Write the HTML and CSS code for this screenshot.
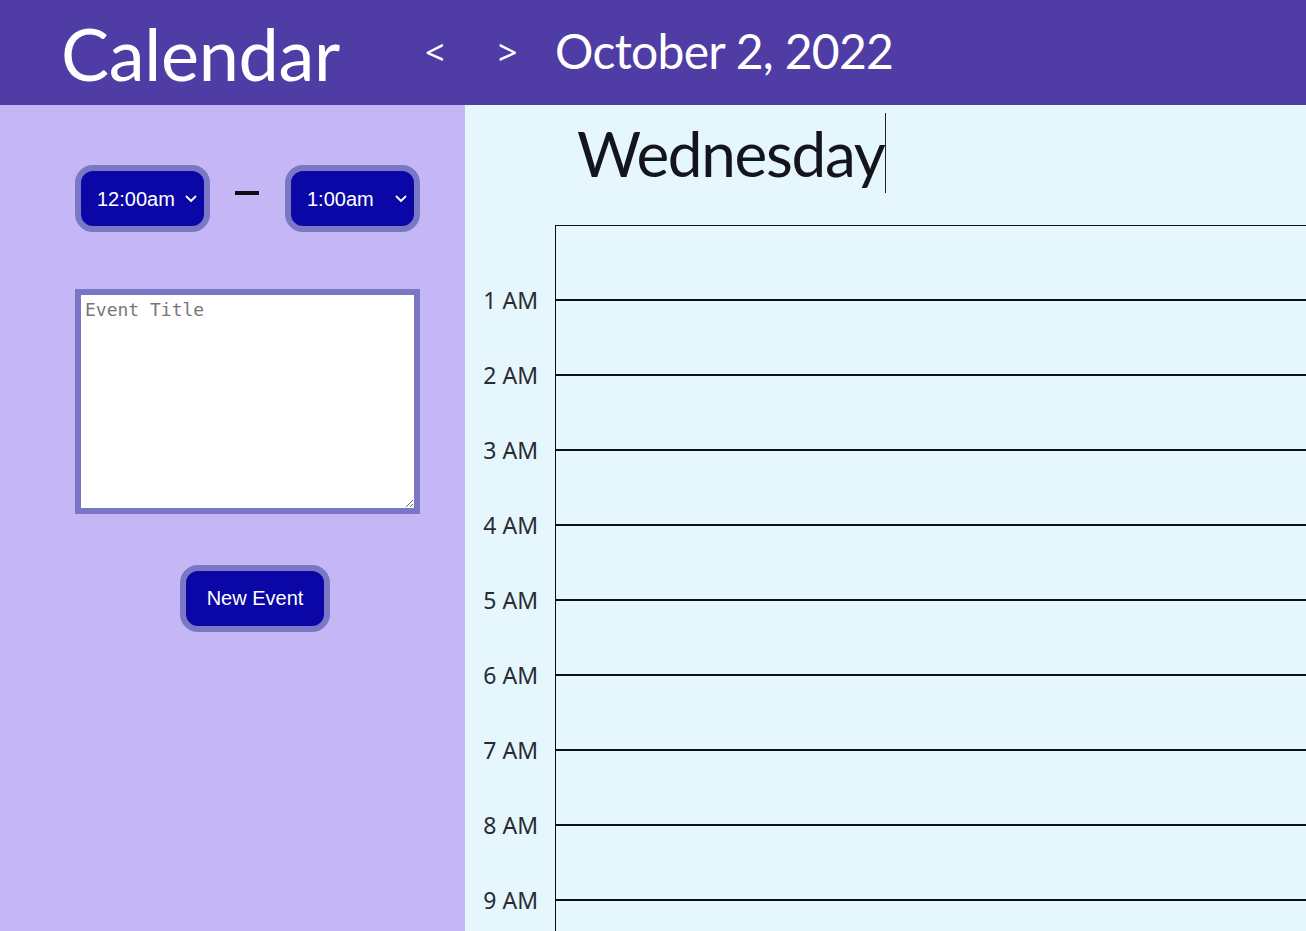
FILE: index.html
```html
<!DOCTYPE html>
<html lang="en">
<head>
<meta charset="utf-8">
<title>Calendar</title>
<link rel="stylesheet" href="styles.css">
</head>
<body>
<header class="topbar">
  <h1 class="brand">Calendar</h1>
  <button class="nav-btn prev" type="button">&lt;</button>
  <button class="nav-btn next" type="button">&gt;</button>
  <div class="date">October 2, 2022</div>
</header>
<div class="layout">
  <aside class="sidebar">
    <div class="time-range">
      <div class="select-wrap">
        <select class="time-select">
          <option>12:00am</option>
          <option>1:00am</option>
        </select>
        <svg class="chev" width="12" height="8" viewBox="0 0 12 8"><path d="M1.5 1.5 L6 6 L10.5 1.5" fill="none" stroke="#fff" stroke-width="1.8" stroke-linecap="round" stroke-linejoin="round"/></svg>
      </div>
      <div class="dash"></div>
      <div class="select-wrap">
        <select class="time-select">
          <option>1:00am</option>
          <option>2:00am</option>
        </select>
        <svg class="chev" width="12" height="8" viewBox="0 0 12 8"><path d="M1.5 1.5 L6 6 L10.5 1.5" fill="none" stroke="#fff" stroke-width="1.8" stroke-linecap="round" stroke-linejoin="round"/></svg>
      </div>
    </div>
    <textarea class="event-title" placeholder="Event Title"></textarea>
    <button class="new-event" type="button">New Event</button>
  </aside>
  <main class="day">
    <h2 class="day-name"><span>Wednesday</span><span class="caret"></span></h2>
    <div class="hours">
      <div class="row first"><div class="label">1 AM</div><div class="cell"></div></div>
      <div class="row"><div class="label">2 AM</div><div class="cell"></div></div>
      <div class="row"><div class="label">3 AM</div><div class="cell"></div></div>
      <div class="row"><div class="label">4 AM</div><div class="cell"></div></div>
      <div class="row"><div class="label">5 AM</div><div class="cell"></div></div>
      <div class="row"><div class="label">6 AM</div><div class="cell"></div></div>
      <div class="row"><div class="label">7 AM</div><div class="cell"></div></div>
      <div class="row"><div class="label">8 AM</div><div class="cell"></div></div>
      <div class="row"><div class="label">9 AM</div><div class="cell"></div></div>
      <div class="row"><div class="label">10 AM</div><div class="cell"></div></div>
      <div class="row"><div class="label">11 AM</div><div class="cell"></div></div>
      <div class="row"><div class="label">12 PM</div><div class="cell"></div></div>
      <div class="row"><div class="label">1 PM</div><div class="cell"></div></div>
      <div class="row"><div class="label">2 PM</div><div class="cell"></div></div>
      <div class="row"><div class="label">3 PM</div><div class="cell"></div></div>
      <div class="row"><div class="label">4 PM</div><div class="cell"></div></div>
      <div class="row"><div class="label">5 PM</div><div class="cell"></div></div>
      <div class="row"><div class="label">6 PM</div><div class="cell"></div></div>
      <div class="row"><div class="label">7 PM</div><div class="cell"></div></div>
      <div class="row"><div class="label">8 PM</div><div class="cell"></div></div>
      <div class="row"><div class="label">9 PM</div><div class="cell"></div></div>
      <div class="row"><div class="label">10 PM</div><div class="cell"></div></div>
      <div class="row"><div class="label">11 PM</div><div class="cell"></div></div>
      <div class="row"><div class="label"></div><div class="cell"></div></div>
    </div>
  </main>
</div>
</body>
</html>
```

FILE: styles.css
```css
* { box-sizing: border-box; }

html, body {
  margin: 0;
  padding: 0;
}

body {
  font-family: "Noto Sans", "Open Sans", sans-serif;
  background: #e5f7fd;
}

.topbar {
  display: flex;
  align-items: center;
  height: 105px;
  background: #4f3ca5;
  color: #fff;
  font-family: Lato, "Noto Sans", sans-serif;
}

.brand {
  flex: none;
  width: 425px;
  margin: 0;
  padding-left: 61px;
  font-size: 72px;
  font-weight: 400;
  line-height: 72px;
  letter-spacing: -0.3px;
}

.nav-btn {
  flex: none;
  margin: 0;
  padding: 0;
  border: none;
  background: none;
  color: #fff;
  font-family: "Noto Sans", sans-serif;
  font-size: 34px;
  line-height: 40px;
  text-align: left;
  margin-top: -2px;
}

.nav-btn.prev { width: 73px; }
.nav-btn.next { width: 57px; }

.date {
  font-size: 48px;
  line-height: 48px;
  margin-top: -3px;
  letter-spacing: -0.7px;
}

.layout {
  display: flex;
  align-items: stretch;
  min-height: calc(100vh - 105px);
}

.sidebar {
  flex: none;
  width: 465px;
  background: #c5b6f5;
  padding: 60px 0 0 75px;
  display: flex;
  flex-direction: column;
  align-items: flex-start;
}

.time-range {
  display: flex;
  align-items: center;
}

.select-wrap {
  position: relative;
  width: 135px;
  height: 67px;
}

.time-select {
  appearance: none;
  -webkit-appearance: none;
  width: 135px;
  height: 67px;
  margin: 0;
  padding: 0 0 0 16px;
  border: 6px solid #7a78c5;
  border-radius: 18px;
  background: #0a07a6;
  color: #fff;
  font-family: "Liberation Sans", Arial, sans-serif;
  font-size: 20px;
  outline: none;
}

.chev {
  position: absolute;
  right: 13px;
  top: 30px;
  pointer-events: none;
}

.dash {
  width: 24px;
  height: 4px;
  background: #0b0b1a;
  margin: -12px 26px 0 25px;
}

.event-title {
  display: block;
  width: 345px;
  height: 225px;
  margin: 57px 0 0 0;
  padding: 5px 4px;
  border: 6px solid #7a76c3;
  border-radius: 0;
  background: #fff;
  font-family: "DejaVu Sans Mono", "Liberation Mono", monospace;
  font-size: 18px;
  line-height: 20px;
  color: #333;
  outline: none;
}

.event-title::placeholder {
  color: #777;
}

.new-event {
  width: 150px;
  height: 67px;
  margin: 51px 0 0 105px;
  padding: 0;
  border: 6px solid #7a78c5;
  border-radius: 18px;
  background: #0a07a6;
  color: #fff;
  font-family: "Liberation Sans", Arial, sans-serif;
  font-size: 20px;
}

.day {
  flex: 1;
  min-width: 0;
  background: #e5f7fd;
}

.day-name {
  display: flex;
  align-items: center;
  height: 96px;
  margin: 0 0 24px 0;
  padding-left: 112px;
  font-family: Lato, "Noto Sans", sans-serif;
  font-size: 62px;
  font-weight: 400;
  line-height: 96px;
  letter-spacing: -1.3px;
  color: #14141c;
}

.caret {
  display: block;
  width: 1px;
  height: 80px;
  margin-left: 1px;
  background: #222;
}

.hours {
  display: flex;
  flex-direction: column;
}

.row {
  display: flex;
}

.label {
  flex: none;
  width: 90px;
  align-self: flex-end;
  padding-right: 17px;
  text-align: right;
  font-size: 23px;
  line-height: 30px;
  margin-bottom: -14px;
  color: #2a2a33;
}

.cell {
  flex: 1;
  height: 75px;
  border-left: 1px solid #0b0f1a;
  border-bottom: 2px solid #0b0f1a;
}

.row.first .cell {
  height: 76px;
  border-top: 1px solid #0b0f1a;
}
```
